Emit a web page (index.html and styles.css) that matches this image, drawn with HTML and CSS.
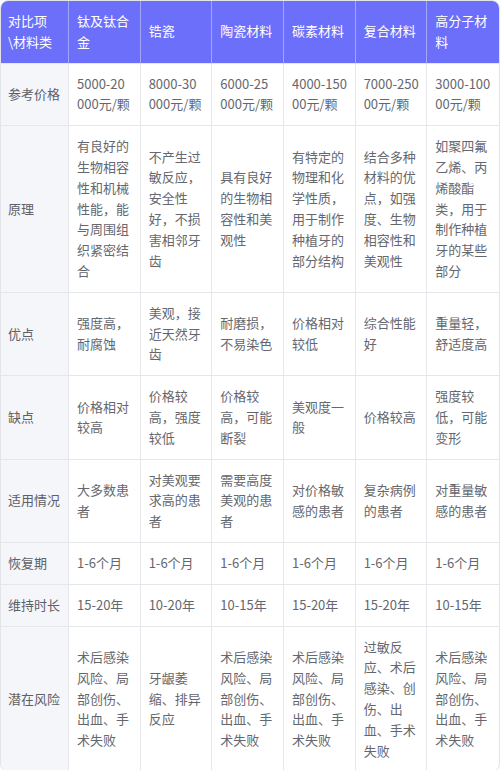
FILE: index.html
```html
<!DOCTYPE html>
<html lang="zh-CN">
<head>
<meta charset="utf-8">
<link rel="stylesheet" href="styles.css">
</head>
<body>
<div class="wrap">
<table class="cmp">
<colgroup>
<col class="c-first"><col><col><col><col><col><col>
</colgroup>
<thead>
<tr>
<th>对比项\材料类</th><th>钛及钛合金</th><th>锆瓷</th><th>陶瓷材料</th><th>碳素材料</th><th>复合材料</th><th>高分子材料</th>
</tr>
</thead>
<tbody>
<tr>
<td class="lab">参考价格</td><td>5000-20<br>000元/颗</td><td>8000-30<br>000元/颗</td><td>6000-25<br>000元/颗</td><td>4000-150<br>00元/颗</td><td>7000-250<br>00元/颗</td><td>3000-100<br>00元/颗</td>
</tr>
<tr>
<td class="lab">原理</td><td>有良好的生物相容性和机械性能，能与周围组织紧密结合</td><td>不产生过敏反应，安全性好，不损害相邻牙齿</td><td>具有良好的生物相容性和美观性</td><td>有特定的物理和化学性质，用于制作种植牙的部分结构</td><td>结合多种材料的优点，如强度、生物相容性和美观性</td><td>如聚四氟乙烯、丙烯酸酯类，用于制作种植牙的某些部分</td>
</tr>
<tr>
<td class="lab">优点</td><td>强度高，耐腐蚀</td><td>美观，接近天然牙齿</td><td>耐磨损，不易染色</td><td>价格相对较低</td><td>综合性能好</td><td>重量轻，舒适度高</td>
</tr>
<tr>
<td class="lab">缺点</td><td>价格相对较高</td><td>价格较高，强度较低</td><td>价格较高，可能断裂</td><td>美观度一般</td><td>价格较高</td><td>强度较低，可能变形</td>
</tr>
<tr>
<td class="lab">适用情况</td><td>大多数患者</td><td>对美观要求高的患者</td><td>需要高度美观的患者</td><td>对价格敏感的患者</td><td>复杂病例的患者</td><td>对重量敏感的患者</td>
</tr>
<tr>
<td class="lab">恢复期</td><td>1-6个月</td><td>1-6个月</td><td>1-6个月</td><td>1-6个月</td><td>1-6个月</td><td>1-6个月</td>
</tr>
<tr>
<td class="lab">维持时长</td><td>15-20年</td><td>10-20年</td><td>10-15年</td><td>15-20年</td><td>15-20年</td><td>10-15年</td>
</tr>
<tr>
<td class="lab">潜在风险</td><td>术后感染风险、局部创伤、出血、手术失败</td><td>牙龈萎缩、排异反应</td><td>术后感染风险、局部创伤、出血、手术失败</td><td>术后感染风险、局部创伤、出血、手术失败</td><td>过敏反应、术后感染、创伤、出血、手术失败</td><td>术后感染风险、局部创伤、出血、手术失败</td>
</tr>
</tbody>
</table>
</div>
</body>
</html>
```

FILE: styles.css
```css
html, body {
  margin: 0;
  padding: 0;
  background: #ffffff;
}
.wrap {
  width: 500px;
  box-sizing: border-box;
  border: 1px solid #e3e4e8;
  border-radius: 8px;
  overflow: hidden;
}
.cmp {
  width: 498px;
  table-layout: fixed;
  border-collapse: separate;
  border-spacing: 0;
  font-family: "Noto Sans CJK SC", "Noto Sans", sans-serif;
  font-size: 13px;
  line-height: 20.8px;
  color: #65676e;
}
.c-first {
  width: 68px;
}
.cmp th,
.cmp td {
  padding: 10px 7px 10px 8px;
  text-align: left;
  vertical-align: middle;
  font-weight: 400;
  word-break: break-all;
  border-right: 1px solid #e6e7eb;
  border-bottom: 1px solid #e6e7eb;
}
.cmp th:first-child,
.cmp td:first-child {
  padding-left: 7px;
  padding-right: 6px;
}
.cmp th:last-child,
.cmp td:last-child {
  border-right: none;
}
.cmp tbody tr:last-child td {
  border-bottom: none;
}
.cmp th {
  background: #6c6ff9;
  color: #ffffff;
  border-right-color: #a3a5f8;
  border-bottom-color: #e6e7eb;
}
.cmp td.lab {
  background: #f5f6fa;
  color: #5e6067;
}
```
